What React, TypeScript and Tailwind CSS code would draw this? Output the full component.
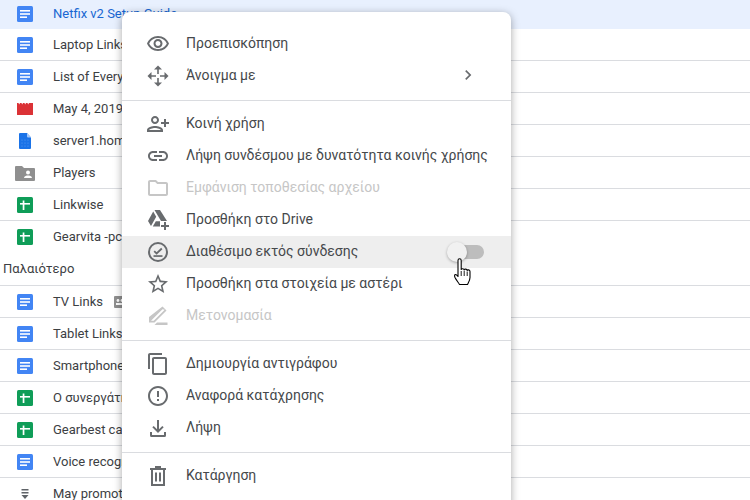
import React from "react";

const Doc = () => (
  <svg width="16" height="16" viewBox="0 0 16 16">
    <rect width="16" height="16" rx="1.5" fill="#4285f4" />
    <rect x="3" y="4" width="10" height="1.6" fill="#fff" />
    <rect x="3" y="7.2" width="10" height="1.6" fill="#fff" />
    <rect x="3" y="10.4" width="7" height="1.6" fill="#fff" />
  </svg>
);
const Sheet = () => (
  <svg width="16" height="16" viewBox="0 0 16 16">
    <rect width="16" height="16" rx="1.5" fill="#0f9d58" />
    <rect x="3" y="6" width="10" height="1.6" fill="#fff" />
    <rect x="5.7" y="3.5" width="1.7" height="9.5" fill="#fff" />
  </svg>
);
const Video = () => (
  <svg width="16" height="16" viewBox="0 0 16 16">
    <path d="M0 2h1.500l.7 1.500.8-1.500h1.500l.7 1.500.8-1.500h1.500l.7 1.500.8-1.500h1.500l.7 1.500.8-1.500H16v11.500a.5.5 0 0 1-.5.5H.5a.5.5 0 0 1-.5-.5z" fill="#db3236" />
  </svg>
);
const File = () => (
  <svg width="16" height="16" viewBox="0 0 16 16">
    <path d="M2 1a1 1 0 0 1 1-1h7l4 4.500V15a1 1 0 0 1-1 1H3a1 1 0 0 1-1-1z" fill="#1a73e8" />
    <path d="M10 0l4 4.500h-3a1 1 0 0 1-1-1z" fill="#a5c8f8" />
    <g fill="#5c9cf0">
      <circle cx="5" cy="7" r=".6" /><circle cx="8" cy="7" r=".6" /><circle cx="11" cy="7" r=".6" />
      <circle cx="5" cy="10" r=".6" /><circle cx="8" cy="10" r=".6" /><circle cx="11" cy="10" r=".6" />
      <circle cx="5" cy="13" r=".6" /><circle cx="8" cy="13" r=".6" /><circle cx="11" cy="13" r=".6" />
    </g>
  </svg>
);
const SharedFolder = () => (
  <svg width="20" height="16" viewBox="0 0 20 16">
    <path d="M0 2a1 1 0 0 1 1-1h6l2 2h10a1 1 0 0 1 1 1v11a1 1 0 0 1-1 1H1a1 1 0 0 1-1-1z" fill="#8f8f8f" />
    <circle cx="13" cy="7.500" r="2" fill="#fff" />
    <path d="M9 13c0-1.800 2.600-2.400 4-2.400s4 .6 4 2.400z" fill="#fff" />
  </svg>
);
const Stack = () => (
  <svg width="16" height="16" viewBox="0 0 16 16">
    <rect x="4.500" y="3" width="7" height="1.500" fill="#5f6368" />
    <rect x="4.500" y="6" width="7" height="1.500" fill="#5f6368" />
    <path d="M4.500 9h7L8 13z" fill="#5f6368" />
  </svg>
);

const Ic = ({ children, color = "#5f6368" }: { children: React.ReactNode; color?: string }) => (
  <svg width="24" height="24" viewBox="0 0 24 24" fill={color}>{children}</svg>
);

const icons: Record<string, (c: string) => React.ReactNode> = {
  eye: (c) => <Ic color={c}><path d="M12 6a9.770 9.770 0 0 1 8.820 5.500C19.170 14.870 15.790 17 12 17s-7.170-2.130-8.820-5.500A9.770 9.770 0 0 1 12 6m0-2C7 4 2.730 7.110 1 11.500 2.730 15.890 7 19 12 19s9.270-3.110 11-7.500C21.270 7.110 17 4 12 4zm0 5a2.500 2.500 0 0 1 0 5 2.500 2.500 0 0 1 0-5m0-2c-2.480 0-4.500 2.020-4.500 4.500S9.520 16 12 16s4.500-2.020 4.500-4.500S14.480 7 12 7z" /></Ic>,
  move: (c) => <Ic color={c}><path d="M12 1.500L8 5.500h8zM12 22.500L8 18.500h8zM1.500 12L5.500 8v8zM22.500 12L18.500 8v8z" /><path d="M12 5v5M12 14v5M5 12h5M14 12h5" stroke={c} strokeWidth="1.600" fill="none" /></Ic>,
  share: (c) => <Ic color={c}><g transform="matrix(-1 0 0 1 24 0)"><path d="M15 12c2.210 0 4-1.790 4-4s-1.790-4-4-4-4 1.790-4 4 1.790 4 4 4zm0-6c1.100 0 2 .9 2 2s-.9 2-2 2-2-.9-2-2 .9-2 2-2zm0 8c-2.670 0-8 1.340-8 4v2h16v-2c0-2.660-5.330-4-8-4zm-6 4c.22-.72 3.310-2 6-2 2.700 0 5.800 1.290 6 2H9zm-3-3v-3h3v-2H6V7H4v3H1v2h3v3h2z" /></g></Ic>,
  link: (c) => <Ic color={c}><path d="M3.900 12c0-1.710 1.390-3.100 3.100-3.100h4V7H7c-2.760 0-5 2.240-5 5s2.240 5 5 5h4v-1.900H7c-1.710 0-3.100-1.390-3.100-3.100zM8 13h8v-2H8v2zm9-6h-4v1.900h4c1.710 0 3.100 1.390 3.100 3.100s-1.390 3.100-3.100 3.100h-4V17h4c2.760 0 5-2.240 5-5s-2.240-5-5-5z" /></Ic>,
  folder: (c) => <Ic color={c}><path d="M9.170 6l2 2H20v10H4V6h5.170M10 4H4c-1.100 0-1.990.9-1.990 2L2 18c0 1.100.9 2 2 2h16c1.100 0 2-.9 2-2V8c0-1.100-.9-2-2-2h-8l-2-2z" /></Ic>,
  drive: (c) => <Ic color={c}><path d="M8.500 2h5.500l7 11h-6z" /><path d="M7.200 3.500l3 5.200L5 18l-3-5z" /><path d="M6.800 18.500l3-5.300h4.200v5.300z" /><path d="M18 14h2v3h3v2h-3v3h-2v-3h-3v-2h3z" /></Ic>,
  offline: (c) => <Ic color={c}><circle cx="12" cy="12" r="9" fill="none" stroke={c} strokeWidth="2" /><path d="M8.200 11.200l2.400 2.300 5.200-5" fill="none" stroke={c} strokeWidth="1.800" /><rect x="7.500" y="15.200" width="9" height="1.700" /></Ic>,
  star: (c) => <Ic color={c}><path d="M22 9.240l-7.190-.62L12 2 9.190 8.630 2 9.240l5.460 4.730L5.820 21 12 17.270 18.180 21l-1.630-7.030L22 9.240zM12 15.400l-3.760 2.270 1-4.280-3.320-2.880 4.380-.38L12 6.100l1.710 4.040 4.380.38-3.320 2.880 1 4.280L12 15.400z" /></Ic>,
  rename: (c) => <Ic color={c}><path d="M16.500 2.500l4 4-12 12H3v-5.500zM16.500 5.300L5 16.800h2.700l11-11z" /><path d="M11 18.500h10.500V21H8.500z" /></Ic>,
  copy: (c) => <Ic color={c}><path d="M16 1H4c-1.100 0-2 .9-2 2v14h2V3h12V1zm3 4H8c-1.100 0-2 .9-2 2v14c0 1.100.9 2 2 2h11c1.100 0 2-.9 2-2V7c0-1.100-.9-2-2-2zm0 16H8V7h11v14z" /></Ic>,
  report: (c) => <Ic color={c}><path d="M11 15h2v2h-2zm0-8h2v6h-2zm.99-5C6.470 2 2 6.480 2 12s4.470 10 9.990 10C17.520 22 22 17.520 22 12S17.520 2 11.990 2zM12 20c-4.420 0-8-3.580-8-8s3.580-8 8-8 8 3.580 8 8-3.580 8-8 8z" /></Ic>,
  download: (c) => <Ic color={c}><path d="M11 4h2v9.200l3.300-3.300 1.400 1.400L12 17l-5.700-5.700 1.400-1.400 3.300 3.300z" /><path d="M4 16h2v3h12v-3h2v3.500a1.500 1.500 0 0 1-1.500 1.500h-13A1.500 1.500 0 0 1 4 19.500z" /></Ic>,
  trash: (c) => <Ic color={c}><path d="M9 2h6v2h5v2h-1v16H5V6H4V4h5zM7 6v14h10V6z" /><rect x="9" y="8.500" width="2" height="9" /><rect x="13" y="8.500" width="2" height="9" /></Ic>,
};

type M = { i: string; t: string; off?: boolean; arrow?: boolean; hover?: boolean };
const groups: M[][] = [
  [{ i: "eye", t: "Προεπισκόπηση" }, { i: "move", t: "Άνοιγμα με", arrow: true }],
  [
    { i: "share", t: "Κοινή χρήση" },
    { i: "link", t: "Λήψη συνδέσμου με δυνατότητα κοινής χρήσης" },
    { i: "folder", t: "Εμφάνιση τοποθεσίας αρχείου", off: true },
    { i: "drive", t: "Προσθήκη στο Drive" },
    { i: "offline", t: "Διαθέσιμο εκτός σύνδεσης", hover: true },
    { i: "star", t: "Προσθήκη στα στοιχεία με αστέρι" },
    { i: "rename", t: "Μετονομασία", off: true },
  ],
  [
    { i: "copy", t: "Δημιουργία αντιγράφου" },
    { i: "report", t: "Αναφορά κατάχρησης" },
    { i: "download", t: "Λήψη" },
  ],
  [{ i: "trash", t: "Κατάργηση" }],
];

const Row = ({ icon, name, extra, line = true, first = false }: { icon: React.ReactNode; name: string; extra?: React.ReactNode; line?: boolean; first?: boolean }) => (
  <div className={`flex items-center ${first ? "h-[29px] pb-[2px] bg-[#e8f0fe] text-[#1967d2]" : "h-8 text-[#3c4043]"} ${line ? "border-b border-[#dadce0]" : ""}`}>
    <div className="w-[50px] flex justify-center shrink-0">{icon}</div>
    <span className="ml-[3px] whitespace-nowrap">{name}</span>
    {extra}
  </div>
);

export default function App() {
  return (
    <div className="relative w-[750px] h-[500px] overflow-hidden bg-white text-[13px] font-['Roboto',sans-serif]">
      <Row first line={false} icon={<Doc />} name="Netfix v2 Setup Guide" />
      <Row icon={<Doc />} name="Laptop Links" />
      <Row icon={<Doc />} name="List of Everything" />
      <Row icon={<Video />} name="May 4, 2019" />
      <Row icon={<File />} name="server1.home" />
      <Row icon={<SharedFolder />} name="Players" />
      <Row icon={<Sheet />} name="Linkwise" />
      <Row line={false} icon={<Sheet />} name="Gearvita -pc" />
      <div className="h-[33px] flex items-center pl-[3px] pb-[1px] border-b border-[#dadce0] text-[#3c4043]">Παλαιότερο</div>
      <Row
        icon={<Doc />}
        name="TV Links"
        extra={
          <svg className="ml-[11px]" width="12" height="12" viewBox="0 0 12 12">
            <rect width="12" height="12" rx="1" fill="#8f8f8f" />
            <circle cx="4" cy="4.500" r="1.400" fill="#fff" />
            <circle cx="8" cy="4.500" r="1.400" fill="#fff" />
            <rect x="2" y="7" width="8" height="2" fill="#fff" />
          </svg>
        }
      />
      <Row icon={<Doc />} name="Tablet Links" />
      <Row icon={<Doc />} name="Smartphones" />
      <Row icon={<Sheet />} name="Ο συνεργάτης" />
      <Row icon={<Sheet />} name="Gearbest campaign" />
      <Row icon={<Doc />} name="Voice recognition" />
      <Row line={false} icon={<Stack />} name="May promotion" />

      <div className="absolute left-[122px] top-[12px] w-[389px] h-[500px] bg-white rounded-t-lg pt-4 text-sm shadow-[0_2px_8px_rgba(0,0,0,0.35)]">
        {groups.map((g, gi) => (
          <div key={gi} className={gi ? "border-t border-[#dadce0] mt-2 pt-[7px]" : ""}>
            {g.map((m) => (
              <div key={m.t} className={`relative h-8 flex items-center pl-6 ${m.hover ? "bg-[#eeeeee]" : ""}`}>
                <div className="w-6 h-6 shrink-0">{icons[m.i](m.off ? "#c6c6c6" : "#686b6e")}</div>
                <span className={`ml-4 pb-[2px] whitespace-nowrap ${m.off ? "text-[#c6c6c6]" : "text-[#45484b]"}`}>{m.t}</span>
                {m.arrow && (
                  <svg className="absolute left-[336px] top-[5px]" width="20" height="20" viewBox="0 0 24 24" fill="#686b6e">
                    <path d="M10 6L8.600 7.400l4.600 4.600-4.600 4.600L10 18l6-6z" />
                  </svg>
                )}
                {m.hover && (
                  <div className="absolute left-[325px] top-[9px] w-[37px] h-[14px]">
                    <div className="absolute right-0 top-0 w-[32px] h-[14px] rounded-full bg-[#bdbdbd]" />
                    <div className="absolute left-0 top-[-3px] w-5 h-5 rounded-full bg-[#f1f1f1] shadow-[0_1px_3px_rgba(0,0,0,0.3)]" />
                  </div>
                )}
                {m.hover && (
                  <svg className="absolute left-[331px] top-[22px] z-10" width="22" height="30" viewBox="0 0 22 30">
                    <path d="M5 2.500c0-1 .7-1.700 1.600-1.700s1.600.7 1.600 1.700v9c0-1 3-1 3 .5 0-1.300 3-1.300 3 .5 0-1 2.800-1 2.800 1v6c0 3-1.500 5-2.500 7H6.500c-1-2-3-4-4.500-7-.7-1.500-.5-3 .5-3 1 0 2.500 2 2.500 2z" fill="#fff" stroke="#000" strokeWidth="1.100" strokeLinejoin="round" />
                    <path d="M8.200 13v5M11.200 13v5M14.200 13.500v4.500" stroke="#000" strokeWidth="0.900" fill="none" />
                  </svg>
                )}
              </div>
            ))}
          </div>
        ))}
      </div>
    </div>
  );
}
